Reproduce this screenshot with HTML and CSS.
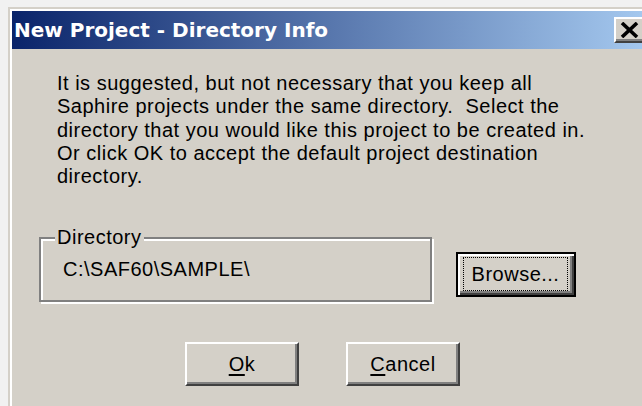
FILE: index.html
```html
<!DOCTYPE html>
<html lang="en">
<head>
<meta charset="utf-8">
<title>New Project - Directory Info</title>
<link rel="stylesheet" href="styles.css">
</head>
<body>
<div class="window">
  <div class="titlebar">
    <span class="title">New Project - Directory Info</span>
    <button class="close" aria-label="Close">
      <svg width="19" height="16" viewBox="0 0 19 16">
        <path d="M2 1 L17 15 M17 1 L2 15" stroke="#000" stroke-width="3.6" fill="none"/>
      </svg>
    </button>
  </div>
  <div class="content">
    <p class="info">It is suggested, but not necessary that you keep all<br>Saphire projects under the same directory.&nbsp; Select the<br>directory that you would like this project to be created in.<br>Or click OK to accept the default project destination<br>directory.</p>
    <div class="dir-row">
      <fieldset class="group">
        <legend>Directory</legend>
        <div class="path">C:\SAF60\SAMPLE\</div>
      </fieldset>
      <button class="btn default browse"><span class="focus">Browse...</span></button>
    </div>
    <div class="actions">
      <button class="btn"><u>O</u>k</button>
      <button class="btn"><u>C</u>ancel</button>
    </div>
  </div>
</div>
</body>
</html>
```
FILE: styles.css
```css
html, body {
  margin: 0;
  height: 100%;
}

body {
  background: #f1f1f1;
  overflow: hidden;
  font-family: "Liberation Sans", Arial, sans-serif;
  font-size: 20px;
  letter-spacing: 0.5px;
  color: #000;
}

/* dialog frame */
.window {
  margin: 7px 0 0 8px;
  width: 640px;
  height: 420px;
  padding: 2px;
  border: 2px solid #d4d0c8;
  background: #d4d0c8;
  box-shadow: inset 2px 2px 0 #fff;
}

.titlebar {
  height: 38px;
  display: flex;
  align-items: center;
  padding: 0 4px 0 2px;
  background: linear-gradient(to right, #0a246a, #a6caf0);
}

.title {
  font-family: "DejaVu Sans", Verdana, sans-serif;
  font-weight: bold;
  font-size: 20px;
  letter-spacing: 0;
  color: #fff;
  white-space: nowrap;
}

.close {
  margin-left: auto;
  width: 34px;
  height: 26px;
  padding: 0 3px 0 0;
  display: flex;
  align-items: center;
  justify-content: center;
  background: #d4d0c8;
  border: 2px solid;
  border-color: #fff #404040 #404040 #fff;
  box-shadow: inset -2px -2px 0 #808080;
}

.content {
  padding: 23px 0 0 27px;
}

.info {
  margin: 0 0 0 18px;
  line-height: 23.3px;
  white-space: nowrap;
}

.dir-row {
  display: flex;
  align-items: flex-start;
  margin-top: 38px;
}

/* etched group box */
.group {
  margin: 0;
  width: 389px;
  padding: 0;
  border: 2px solid #808080;
  box-shadow: inset 2px 2px 0 #fff, 2px 2px 0 #fff;
}

.group legend {
  margin-left: 14px;
  padding: 0 2px;
  line-height: 23px;
  background: #d4d0c8;
}

.path {
  padding: 9px 0 19px 22px;
  line-height: 23px;
}

.btn {
  font: inherit;
  letter-spacing: inherit;
  color: #000;
  width: 114px;
  height: 44px;
  padding: 0;
  background: #d4d0c8;
  border: 2px solid;
  border-color: #fff #404040 #404040 #fff;
  box-shadow: inset -2px -2px 0 #808080;
}

.btn u {
  text-underline-offset: 3px;
  text-decoration-thickness: 2px;
}

.browse {
  width: 120px;
  height: 45px;
  margin: 26px 0 0 24px;
  border: 2px solid #000;
  box-shadow: inset 2px 2px 0 #fff, inset -2px -2px 0 #404040, inset -4px -4px 0 #808080;
  display: flex;
  padding: 3px 6px 4px 5px;
}

.focus {
  flex: 1;
  display: flex;
  align-items: center;
  justify-content: center;
  border: 1px dotted #000;
}

.actions {
  display: flex;
  gap: 47px;
  margin: 40px 0 0 146px;
}
```
